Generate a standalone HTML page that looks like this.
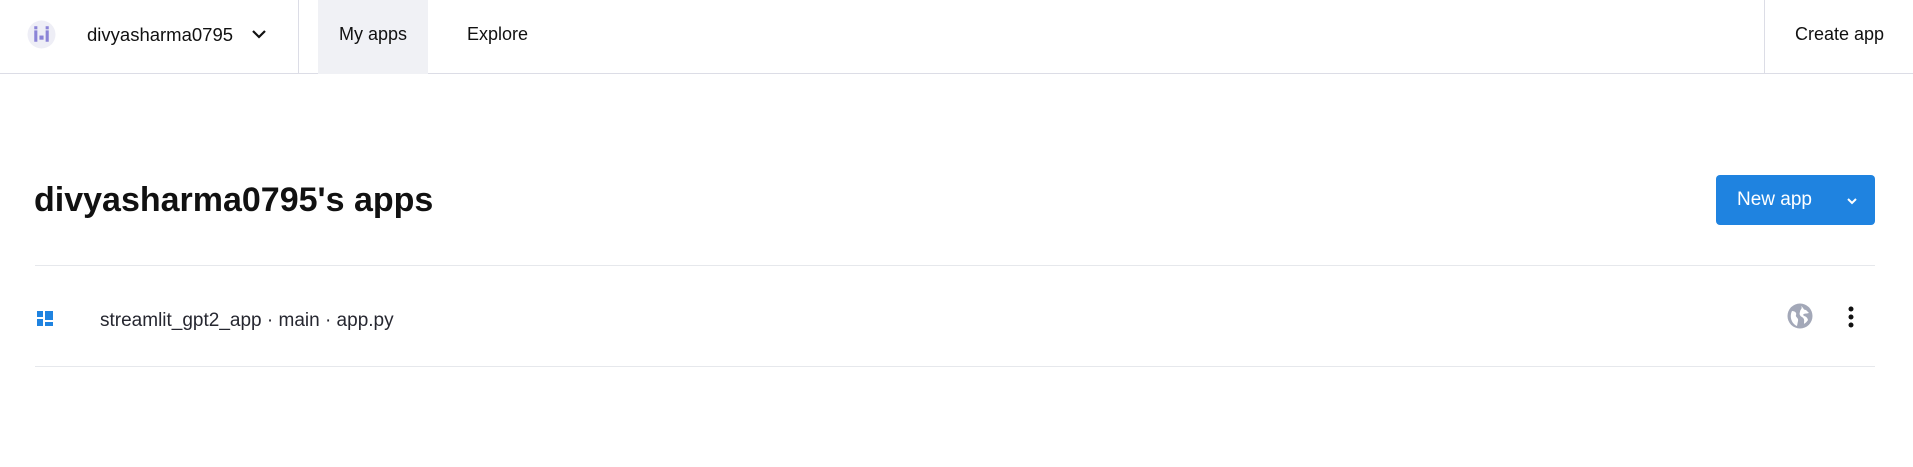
<!DOCTYPE html>
<html><head><meta charset="utf-8"><style>
*{margin:0;padding:0;box-sizing:border-box}
body{width:1913px;height:467px;background:#fff;font-family:"Liberation Sans",sans-serif;color:#111;position:relative;overflow:hidden}
.a{position:absolute}
</style></head><body>
<div class="a" style="left:0;top:0;width:1913px;height:74px;border-bottom:1px solid #dcdde6"></div>
<svg class="a" style="left:27px;top:20px" width="29" height="29" viewBox="0 0 28 28"><circle cx="14" cy="14" r="13.5" fill="#eeeef6"/><rect x="7" y="6" width="3" height="3" fill="#8b84d7"/><rect x="18" y="6" width="3" height="3" fill="#8b84d7"/><rect x="7" y="10" width="3" height="11" fill="#8b84d7"/><rect x="18" y="10" width="3" height="11" fill="#8b84d7"/><rect x="12" y="15" width="4" height="4" fill="#8b84d7"/></svg>
<div class="a" style="left:87px;top:24px;font-size:18.5px">divyasharma0795</div>
<svg class="a" style="left:251px;top:28px" width="16" height="12" viewBox="0 0 16 12"><path d="M2 3l6 6 6-6" stroke="#111" stroke-width="2.2" fill="none"/></svg>
<div class="a" style="left:298px;top:0;width:1px;height:74px;background:#dcdde6"></div>
<div class="a" style="left:318px;top:0;width:110px;height:74px;background:#f0f1f5"></div>
<div class="a" style="left:339px;top:24px;font-size:18px">My apps</div>
<div class="a" style="left:467px;top:24px;font-size:18px">Explore</div>
<div class="a" style="left:1764px;top:0;width:1px;height:74px;background:#dcdde6"></div>
<div class="a" style="left:1795px;top:24px;font-size:18px">Create app</div>
<div class="a" style="left:34px;top:181px;font-size:34px;font-weight:bold">divyasharma0795's apps</div>
<div class="a" style="left:1716px;top:175px;width:159px;height:50px;background:#1f83e0;border-radius:4px"></div>
<div class="a" style="left:1737px;top:189px;font-size:19px;color:#fff">New app</div>
<svg class="a" style="left:1846px;top:196px" width="12" height="10" viewBox="0 0 12 10"><path d="M2 3l4 4 4-4" stroke="#fff" stroke-width="2" fill="none"/></svg>
<div class="a" style="left:35px;top:265px;width:1840px;height:1px;background:#e6e8ec"></div>
<svg class="a" style="left:37px;top:311px" width="16" height="15" viewBox="0 0 16 15"><rect x="0" y="0" width="6" height="6" fill="#1f83e0"/><rect x="0" y="8" width="6" height="7" fill="#1f83e0"/><rect x="8" y="0" width="8" height="9" fill="#1f83e0"/><rect x="8" y="11" width="8" height="4" fill="#1f83e0"/></svg>
<div class="a" style="left:100px;top:310px;font-size:19px;color:#262730">streamlit_gpt2_app · main · app.py</div>
<svg class="a" style="left:1787px;top:303px" width="26" height="26" viewBox="0 0 26 26"><circle cx="13" cy="13" r="12.5" fill="#a3a8b8"/><path d="M5 8c3 0 5 2 4 4s3 3 2 6l-1 5C5 21 2 14 5 8zM14 3c3 2 2 4 5 4l3 3c-3 1-5 0-6 2 2 2 4 1 5 5-2 3-3 3-4 4 0-3 1-5-2-7-2-1-3-3-2-5 0-3 3-3 1-6z" fill="#fff"/></svg>
<svg class="a" style="left:1846px;top:305px" width="10" height="26" viewBox="0 0 10 26"><circle cx="5" cy="4" r="2.5" fill="#111"/><circle cx="5" cy="12" r="2.5" fill="#111"/><circle cx="5" cy="20" r="2.5" fill="#111"/></svg>
<div class="a" style="left:35px;top:366px;width:1840px;height:1px;background:#e6e8ec"></div>
</body></html>
